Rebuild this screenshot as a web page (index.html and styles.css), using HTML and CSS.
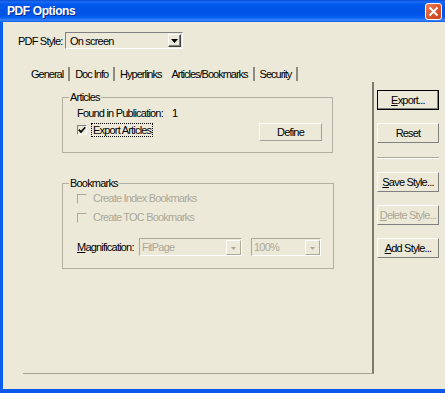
FILE: index.html
```html
<!DOCTYPE html>
<html>
<head>
<meta charset="utf-8">
<title>PDF Options</title>
<link rel="stylesheet" href="styles.css">
</head>
<body>
<div class="window">
  <div class="titlebar">
    <span class="title">PDF Options</span>
    <span class="close"><svg width="11" height="11" viewBox="0 0 11 11"><path d="M1.5 1.5 L9.5 9.5 M9.5 1.5 L1.5 9.5" stroke="#fff" stroke-width="2" fill="none"/></svg></span>
  </div>
  <div class="client">
    <div class="style-row">
      <span class="style-lbl">PDF Style:</span>
      <div class="select style-select">
        <span class="val">On screen</span>
        <span class="arrow"><svg width="7" height="4" viewBox="0 0 7 4"><path d="M0 0 H7 L3.5 4 Z" fill="#000"/></svg></span>
      </div>
    </div>
    <div class="main">
      <div class="left">
        <div class="tabs">
          <span class="tab sep">General</span>
          <span class="tab sep">Doc Info</span>
          <span class="tab">Hyperlinks</span>
          <span class="tab active sep">Articles/Bookmarks</span>
          <span class="tab sep">Security</span>
        </div>
        <div class="panel">
          <fieldset class="group articles">
            <legend>Articles</legend>
            <div class="found"><span class="found-lbl">Found in Publication:</span><span class="count">1</span></div>
            <div class="export-row">
              <div class="check">
                <span class="box"><svg width="8" height="8" viewBox="0 0 8 8"><path d="M0.8 3.6 L3 6 L7.2 1.2" stroke="#000" stroke-width="1.7" fill="none"/></svg></span>
                <span class="focus">Export Articles</span>
              </div>
              <span class="btn define">Define</span>
            </div>
          </fieldset>
          <fieldset class="group bookmarks">
            <legend>Bookmarks</legend>
            <div class="check disabled first"><span class="box off"></span><span class="ctext">Create Index Bookmarks</span></div>
            <div class="check disabled second"><span class="box off"></span><span class="ctext">Create TOC Bookmarks</span></div>
            <div class="mag-row">
              <span class="mag-lbl"><u>M</u>agnification:</span>
              <div class="select dis fit"><span class="val">FitPage</span><span class="arrow"><svg width="5" height="3" viewBox="0 0 5 3"><path d="M0 0 H5 L2.5 3 Z" fill="#ACA899"/></svg></span></div>
              <div class="select dis zoom"><span class="val">100%</span><span class="arrow"><svg width="5" height="3" viewBox="0 0 5 3"><path d="M0 0 H5 L2.5 3 Z" fill="#ACA899"/></svg></span></div>
            </div>
          </fieldset>
        </div>
      </div>
      <div class="buttons">
        <span class="btn side default"><u>E</u>xport...</span>
        <span class="btn side">Reset</span>
        <span class="rule"></span>
        <span class="btn side"><u>S</u>ave Style...</span>
        <span class="btn side disabled"><u>D</u>elete Style...</span>
        <span class="btn side"><u>A</u>dd Style...</span>
      </div>
    </div>
  </div>
</div>
</body>
</html>
```

FILE: styles.css
```css
html, body {
  margin: 0;
  padding: 0;
}
body {
  width: 445px;
  height: 393px;
  overflow: hidden;
  font-family: "Liberation Sans", Arial, sans-serif;
  font-size: 11px;
  letter-spacing: -0.8px;
  color: #000;
}
.window {
  width: 445px;
  height: 393px;
  box-sizing: border-box;
  background: #ECE9D8;
  border-left: 3px solid #0B5CF0;
  border-bottom: 4px solid #0A57EC;
  display: flex;
  flex-direction: column;
}
.titlebar {
  height: 22px;
  flex: none;
  display: flex;
  align-items: center;
  justify-content: space-between;
  padding: 0 3px 0 7px;
  margin-left: -3px;
  background: linear-gradient(to bottom, #0A4FD6 0px, #1C6BF5 2px, #0058EE 4px, #0054E3 11px, #0055EA 15px, #0A63F6 18px, #3D86FA 20px, #0B5CEA 22px);
}
.title {
  color: #fff;
  font-weight: bold;
  font-size: 12px;
  letter-spacing: -0.4px;
  text-shadow: 1px 1px 0 #0A2A8C;
}
.close {
  width: 17px;
  height: 17px;
  box-sizing: border-box;
  border: 1px solid #fff;
  border-radius: 3px;
  background: linear-gradient(135deg, #EE8160 0%, #E05A31 45%, #C9401B 100%);
  display: flex;
  align-items: center;
  justify-content: center;
}
.client {
  flex: 1;
  display: flex;
  flex-direction: column;
}
.style-row {
  display: flex;
  align-items: center;
  height: 17px;
  margin-top: 10px;
  padding-left: 15px;
}
.style-lbl {
  width: 47px;
}
.select {
  box-sizing: border-box;
  display: flex;
  align-items: center;
  justify-content: space-between;
  border: 1px solid;
  border-color: #808080 #fff #fff #808080;
}
.style-select {
  width: 118px;
  height: 17px;
  padding: 0 1px 0 4px;
}
.arrow {
  width: 13px;
  height: 13px;
  box-sizing: border-box;
  border: 1px solid;
  border-color: #fff #404040 #404040 #fff;
  box-shadow: inset -1px -1px 0 #808080;
  display: flex;
  align-items: center;
  justify-content: center;
}
.main {
  display: flex;
  margin-top: 18px;
}
.left {
  margin-left: 20px;
  width: 351px;
}
.tabs {
  display: flex;
  height: 15px;
  padding-left: 3px;
}
.tab {
  padding: 0 5px;
  line-height: 14px;
  height: 14px;
  letter-spacing: -1px;
}
.tab.sep {
  border-right: 2px solid #8E8C82;
}
.panel {
  height: 292px;
  box-sizing: border-box;
  border-right: 2px solid #7D7B70;
  border-bottom: 1px solid #A5A296;
  padding: 9px 0 0 39px;
}
.group {
  margin: 0;
  padding: 0 0 11px 14px;
  border: 1px solid #B3B0A3;
  min-width: 0;
  box-sizing: border-box;
}
.group legend {
  padding: 0 1px;
  margin-left: -8px;
  line-height: 13px;
}
.articles {
  width: 271px;
}
.found {
  margin-top: 3px;
  line-height: 13px;
  display: flex;
}
.found-lbl {
  width: 95px;
}
.export-row {
  display: flex;
  align-items: flex-start;
  height: 18px;
  margin-top: 3px;
}
.check {
  display: flex;
  align-items: flex-start;
}
.box {
  width: 10px;
  height: 10px;
  box-sizing: border-box;
  border: 1px solid;
  border-color: #808080 #fff #fff #808080;
  margin-top: 2px;
  margin-right: 4px;
  display: flex;
  align-items: center;
  justify-content: center;
}
.box.off {
  border-color: #ACA899 transparent transparent #ACA899;
  margin-top: 0;
  margin-right: 6px;
}
.focus {
  border: 1px dotted #000;
  padding: 0 1px;
  line-height: 12px;
}
.btn {
  box-sizing: border-box;
  display: flex;
  align-items: center;
  justify-content: center;
  border: 1px solid;
  border-color: #fff #A0A0A0 #A0A0A0 #fff;
}
.define {
  width: 63px;
  height: 18px;
  margin-left: auto;
  margin-right: 10px;
}
.bookmarks {
  width: 272px;
  margin-top: 24px;
  padding-bottom: 12px;
}
.check.disabled {
  color: #ACA899;
  line-height: 13px;
  align-items: center;
}
.check.first {
  margin-top: 2px;
}
.check.second {
  margin-top: 6px;
}
.mag-row {
  display: flex;
  align-items: center;
  margin-top: 14px;
}
.mag-lbl {
  width: 62px;
}
.select.dis {
  height: 18px;
  border-color: #ACA899 #fff #fff #ACA899;
  color: #ACA899;
  padding: 0 0 0 2px;
}
.select.dis .arrow {
  width: 15px;
  height: 15px;
  border-color: #fff #ACA899 #ACA899 #fff;
  box-shadow: none;
  align-items: flex-end;
  padding-bottom: 4px;
}
.fit {
  width: 103px;
}
.zoom {
  width: 70px;
  margin-left: 9px;
}
.buttons {
  display: flex;
  flex-direction: column;
  width: 62px;
  margin-left: 3px;
  margin-top: 23px;
}
.btn.side {
  height: 20px;
  border-color: #fff #808080 #808080 #fff;
  margin-bottom: 13px;
}
.btn.side.default {
  border: 1px solid #000;
  box-shadow: inset -1px -1px 0 #808080;
}
.btn.side.disabled {
  color: #ACA899;
}
.rule {
  height: 0;
  border-top: 1px solid #ACA899;
  border-bottom: 1px solid #fff;
  margin: 1px 0 13px;
}
u {
  text-decoration: underline;
}
```
